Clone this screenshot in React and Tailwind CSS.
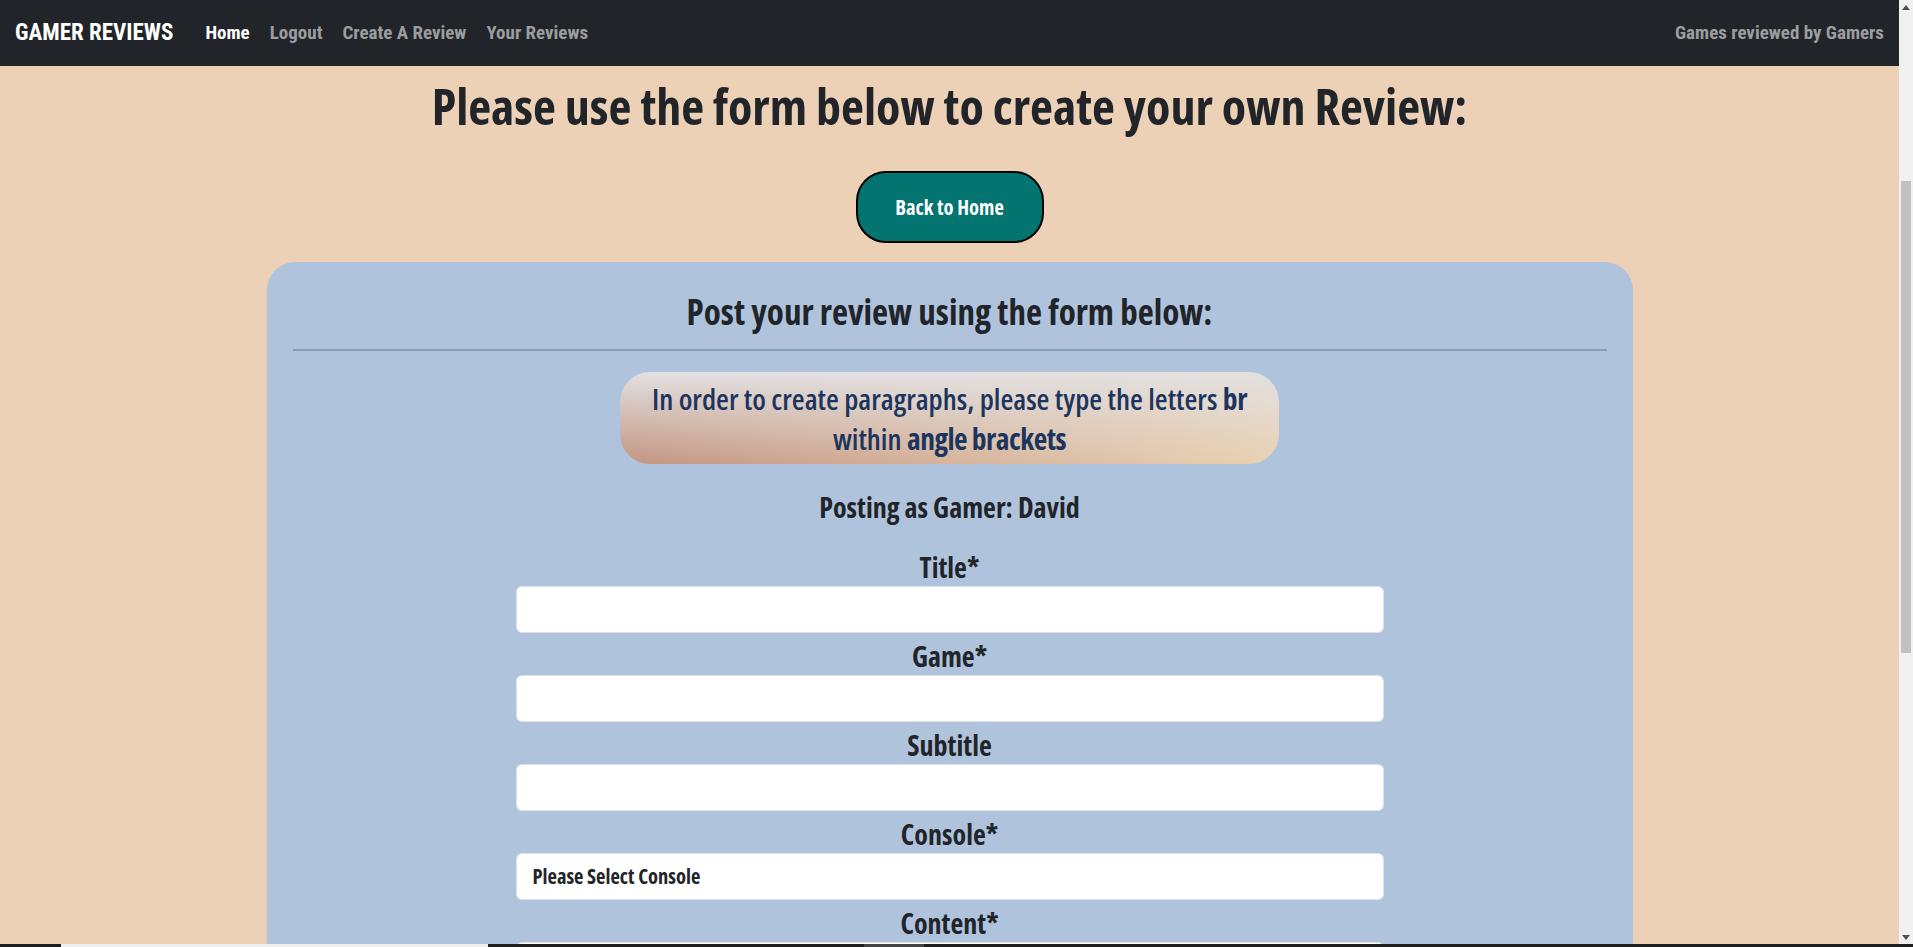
import React from "react";

function Field({ label, children }) {
  return (
    <div className="flex flex-col items-center mb-[4px]">
      <div className="text-[28px] leading-[38px] font-bold text-[#212529]">{label}</div>
      {children}
    </div>
  );
}

function TextInput() {
  return (
    <input
      type="text"
      className="block w-[868px] h-[47px] bg-white rounded-[6px] border border-[#dee2e6] outline-none px-[16px]"
    />
  );
}

export default function App() {
  return (
    <div className="h-screen w-full flex flex-col overflow-hidden font-['Open_Sans',sans-serif] font-stretch-condensed">
      <div className="flex flex-row flex-1 min-h-0">
        <div className="flex-1 min-w-0 bg-[#edd1b6] overflow-hidden flex flex-col">
          {/* Navbar */}
          <nav className="h-[66px] shrink-0 bg-[#212529] flex items-center px-[15px] font-['Roboto',sans-serif] font-stretch-condensed">
            <span className="text-white text-[23px] font-bold">GAMER REVIEWS</span>
            <div className="flex items-center gap-[20px] ml-[32px] text-[19px] font-bold">
              <span className="text-white">Home</span>
              <span className="text-[#9b9d9f]">Logout</span>
              <span className="text-[#9b9d9f]">Create A Review</span>
              <span className="text-[#9b9d9f]">Your Reviews</span>
            </div>
            <span className="ml-auto text-[19px] font-bold text-[#9b9d9f]">Games reviewed by Gamers</span>
          </nav>

          {/* Heading */}
          <h1 className="mt-[10px] text-center text-[50px] leading-[1.2] font-bold text-[#212529]">
            Please use the form below to create your own Review:
          </h1>

          <div className="flex justify-center mt-[35px]">
            <button className="w-[188px] h-[72px] rounded-[30px] bg-[#047471] border-2 border-black text-white text-[20.5px] font-bold">
              Back to Home
            </button>
          </div>

          {/* Card */}
          <div className="mt-[19px] mx-auto w-[1366px] bg-[#b0c3dd] rounded-t-[28px] px-[26px] pt-[29px] pb-[40px]">
            <h2 className="text-center text-[35px] leading-[1.2] font-bold text-[#212529]">
              Post your review using the form below:
            </h2>
            <div className="mt-[16px] h-[2px] bg-[#8c9cb1]" />

            <div className="mt-[21px] flex justify-center">
              <div className="w-[659px] rounded-[30px] pt-[7px] pb-[5px] text-center text-[29.5px] leading-[40px] font-semibold text-[#1c355e] bg-[linear-gradient(to_bottom,rgba(226,224,224,1)_0%,rgba(226,224,224,0.1)_100%),linear-gradient(to_right,#bf8c78,#ebd0ae)]">
                <div>
                  In order to create paragraphs, please type the letters <b className="font-bold tracking-[-0.4px]">br</b>
                </div>
                <div>
                  within <b className="font-bold tracking-[-0.5px]">angle brackets</b>
                </div>
              </div>
            </div>

            <p className="mt-[23px] mb-[21px] text-center text-[28px] leading-[40px] font-bold text-[#212529]">
              Posting as Gamer: David
            </p>

            <Field label="Title*">
              <TextInput />
            </Field>
            <Field label="Game*">
              <TextInput />
            </Field>
            <Field label="Subtitle">
              <TextInput />
            </Field>
            <Field label="Console*">
              <select className="block appearance-none w-[868px] h-[47px] bg-white rounded-[6px] border border-[#dee2e6] outline-none pl-[16px] text-[20.5px] font-bold text-[#212529]">
                <option>Please Select Console</option>
              </select>
            </Field>
            <Field label="Content*">
              <div className="w-[868px] h-[120px] bg-white rounded-[6px] border border-[#dee2e6]" />
            </Field>
          </div>
        </div>

        {/* Scrollbar */}
        <div className="w-[14px] shrink-0 bg-[#f1f1f1] flex flex-col items-center">
          <div className="h-[14px] flex items-center justify-center">
            <svg width="8" height="5" viewBox="0 0 8 5"><path d="M0 5 L4 0 L8 5 Z" fill="#505050" /></svg>
          </div>
          <div className="mt-[167px] w-[10px] h-[472px] bg-[#c1c1c1]" />
          <div className="mt-auto h-[14px] flex items-center justify-center">
            <svg width="8" height="5" viewBox="0 0 8 5"><path d="M0 0 L8 0 L4 5 Z" fill="#505050" /></svg>
          </div>
        </div>
      </div>

      {/* Bottom strip */}
      <div className="h-[3px] shrink-0 flex bg-[#1e1e1e]">
        <div className="w-[61px]" />
        <div className="w-[427px] bg-[#eeeeee]" />
        <div className="w-[376px]" />
        <div className="w-[60px] bg-[#444444]" />
      </div>
    </div>
  );
}
